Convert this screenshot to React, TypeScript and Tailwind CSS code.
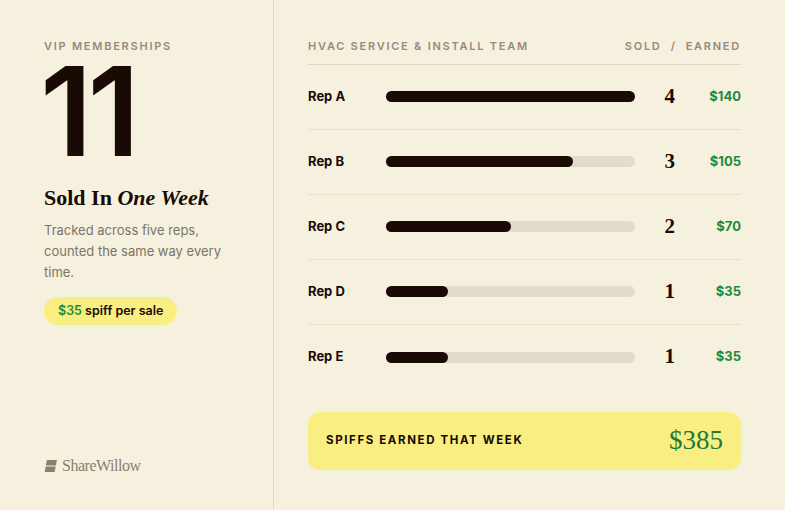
import React from 'react';

const reps = [
  { name: 'Rep A', sold: 4, earned: '$140' },
  { name: 'Rep B', sold: 3, earned: '$105' },
  { name: 'Rep C', sold: 2, earned: '$70' },
  { name: 'Rep D', sold: 1, earned: '$35' },
  { name: 'Rep E', sold: 1, earned: '$35' },
];

const serif = { fontFamily: '"Liberation Serif", serif' };

export default function App() {
  return (
    <div
      className="flex h-[510px] w-[785px] bg-[#f5f1de] text-[#1a0a05]"
      style={{ fontFamily: '"Inter", "Liberation Sans", sans-serif' }}
    >
      {/* Left panel */}
      <div className="flex w-[274px] shrink-0 flex-col border-r border-[#e0dbc6] pl-[44px] pr-6 pt-[38px] pb-[32px]">
        <div className="text-[11px] font-semibold tracking-[0.16em] text-[#948b7c]">VIP MEMBERSHIPS</div>
        <div className="-ml-[4px] mt-[6px] h-[100px] overflow-hidden text-[124px] font-semibold leading-[100px] tracking-[-0.04em]">
          11
        </div>
        <div className="mt-[23px] text-[22px] leading-[28px]" style={serif}>
          <span className="font-bold">Sold In </span>
          <span className="font-bold italic">One Week</span>
        </div>
        <p className="mt-[8px] text-[13px] leading-[21px] text-[#7b7468]">
          Tracked across five reps, counted the same way every time.
        </p>
        <div className="mt-[14px] self-start rounded-full bg-[#f9ee82] px-[14px] py-[5px] text-[12.5px] font-semibold">
          <span className="text-[#1e8a3a]">$35</span> spiff per sale
        </div>
        <div className="mt-auto flex items-center gap-[4px] text-[#8a8070]">
          <svg width="14" height="12" viewBox="0 0 14 12">
            <path d="M3 0h10l-1.2 5.6H1.8z M1.8 6.4h10L10.6 12H0.6z" fill="#8a8070" />
          </svg>
          <span className="text-[16px] tracking-[-0.03em]" style={serif}>
            ShareWillow
          </span>
        </div>
      </div>

      {/* Right panel */}
      <div className="flex flex-1 flex-col pl-[34px] pr-[44px] pt-[38px]">
        <div className="flex justify-between border-b border-[#dcd6c2] pb-[9px] text-[11px] font-semibold tracking-[0.16em] text-[#948b7c]">
          <span>HVAC SERVICE &amp; INSTALL TEAM</span>
          <span>SOLD&nbsp; / &nbsp;EARNED</span>
        </div>
        {reps.map((r, i) => (
          <div
            key={r.name}
            className={`flex h-[65px] items-center ${i < reps.length - 1 ? 'border-b border-[#e6e0cc]' : ''}`}
          >
            <span className="w-[78px] text-[13px] font-bold">{r.name}</span>
            <div className="h-[11px] w-[249px] rounded-full bg-[#e2ddca]">
              <div className="h-full rounded-full bg-[#1a0a05]" style={{ width: `${(r.sold / 4) * 100}%` }} />
            </div>
            <span className="w-[40px] text-right text-[21px] font-bold" style={serif}>{r.sold}</span>
            <span className="flex-1 text-right text-[13px] font-bold text-[#1e8a3a]">{r.earned}</span>
          </div>
        ))}
        <div className="mt-[22px] flex h-[58px] items-center justify-between rounded-[12px] bg-[#f9ee82] px-[18px]">
          <span className="text-[11.5px] font-bold tracking-[0.14em]">SPIFFS EARNED THAT WEEK</span>
          <span className="text-[27px] text-[#1e7a35]" style={serif}>$385</span>
        </div>
      </div>
    </div>
  );
}
